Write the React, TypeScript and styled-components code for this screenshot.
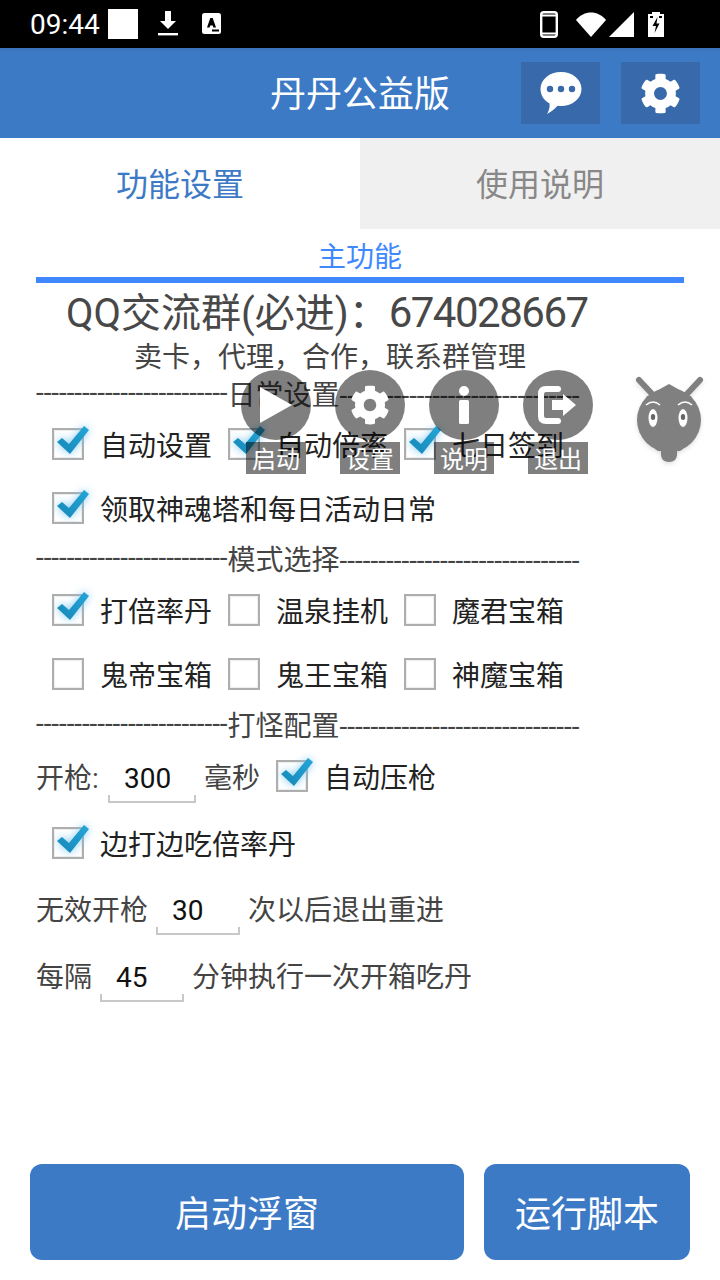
import React from "react";
import styled, { createGlobalStyle } from "styled-components";
import { FaCog } from "react-icons/fa";

const Global = createGlobalStyle`
  html, body { margin: 0; padding: 0; background: #fff; }
  body { font-family: Roboto, "Noto Sans CJK SC", sans-serif; }
  * { box-sizing: border-box; }
`;

const Page = styled.div`
  position: relative;
  width: 720px;
  height: 1280px;
  display: flex;
  flex-direction: column;
  overflow: hidden;
  background: #fff;
  color: #222;
`;

const StatusBar = styled.div`
  height: 48px;
  background: #000;
  display: flex;
  align-items: center;
  padding: 0 56px 0 30px;
  color: #fff;
  flex: none;
`;
const Time = styled.span`
  font-size: 28px;
  font-weight: 400;
  width: 78px;
`;
const Square = styled.span`
  width: 30px;
  height: 30px;
  background: #fff;
  margin-right: 19px;
`;
const StatusGap = styled.span`
  flex: 1;
`;
const StatusIcon = styled.svg<{ $ml?: number }>`
  display: block;
  flex: none;
  margin-left: ${(p) => p.$ml ?? 0}px;
`;

const AppBar = styled.header`
  height: 90px;
  flex: none;
  background: linear-gradient(#3a73bb 0, #3d7ac6 5px);
  display: grid;
  grid-template-columns: 1fr auto 1fr;
  align-items: center;
  padding: 0 20px;
  color: #fff;
`;
const Title = styled.h1`
  grid-column: 2;
  margin: 0;
  padding-bottom: 4px;
  font-size: 36px;
  font-weight: 400;
`;
const Actions = styled.div`
  grid-column: 3;
  justify-self: end;
  display: flex;
  gap: 21px;
`;
const ActionButton = styled.button`
  width: 79px;
  height: 62px;
  border: 0;
  padding: 0;
  color: #fff;
  background: #3769ab;
  display: flex;
  align-items: center;
  justify-content: center;
`;

const Tabs = styled.div`
  display: flex;
  height: 91px;
  flex: none;
`;
const Tab = styled.div<{ $active?: boolean }>`
  flex: 1;
  display: flex;
  align-items: center;
  justify-content: center;
  padding-bottom: 3px;
  font-size: 32px;
  color: ${(p) => (p.$active ? "#3d7ac6" : "#888")};
  background: ${(p) => (p.$active ? "#fff" : "#f0f0f0")};
`;

const Content = styled.main`
  flex: 1;
  display: flex;
  flex-direction: column;
  padding: 0 36px;
`;
const SectionTitle = styled.div`
  height: 48px;
  padding-top: 8px;
  text-align: center;
  font-size: 28px;
  line-height: 42px;
  color: #4088ff;
`;
const SectionLine = styled.div`
  height: 6px;
  background: #4088ff;
  margin-bottom: 5px;
`;
const GroupLine = styled.div`
  height: 48px;
  line-height: 50px;
  padding-left: 30px;
  font-size: 40px;
  color: #484848;
  white-space: nowrap;
`;
const Digits = styled.span`
  font-size: 42px;
  letter-spacing: -1.5px;
`;
const Note = styled.div`
  height: 40px;
  line-height: 44px;
  padding-left: 98px;
  font-size: 28px;
  color: #444;
  white-space: nowrap;
`;
const Divider = styled.div<{ $h: number }>`
  height: ${(p) => p.$h}px;
  display: flex;
  align-items: center;
  padding-bottom: 3px;
  font-size: 28px;
  color: #444;
  white-space: nowrap;
`;
const LeftDashes = styled.span`
  letter-spacing: -0.08px;
`;
const CheckGrid = styled.div<{ $h: number }>`
  height: ${(p) => p.$h}px;
  display: grid;
  grid-template-columns: repeat(3, 176px);
  align-items: center;
  padding-left: 16px;
`;
const CheckRow = styled.div<{ $h: number }>`
  height: ${(p) => p.$h}px;
  display: flex;
  align-items: center;
  padding-left: 16px;
`;
const CheckItem = styled.label`
  display: flex;
  align-items: center;
  gap: 16px;
  font-size: 28px;
  color: #222;
  white-space: nowrap;
`;
const Box = styled.span`
  position: relative;
  display: block;
  width: 32px;
  height: 32px;
  flex: none;
  border: 2px solid #aeaeae;
  box-shadow: inset 0 0 0 1px #eee;
  background: #fff;
`;
const Tick = styled.svg`
  position: absolute;
  left: -2px;
  top: -2px;
  overflow: visible;
  filter: drop-shadow(0 0 4px rgba(110, 195, 240, 0.9));
`;
const FormRow = styled.div<{ $h: number }>`
  height: ${(p) => p.$h}px;
  display: flex;
  align-items: center;
  padding-bottom: 2px;
  font-size: 28px;
  color: #444;
  white-space: nowrap;
`;
const FormLabel = styled.span<{ $w: number }>`
  width: ${(p) => p.$w}px;
`;
const Field = styled.div<{ $w: number }>`
  width: ${(p) => p.$w}px;
  height: 50px;
  margin: 0 8px;
  padding-left: 16px;
  font-size: 28px;
  line-height: 51px;
  color: #111;
  border: solid #c8c8c8;
  border-width: 0 0 2px;
  position: relative;
  transform: translateY(2px);
  &::before,
  &::after {
    content: "";
    position: absolute;
    bottom: 0;
    width: 2px;
    height: 6px;
    background: #c8c8c8;
  }
  &::before { left: 0; }
  &::after { right: 0; }
`;
const InlineCheck = styled.div`
  margin-left: 16px;
`;
const Spacer = styled.div`
  flex: 1;
`;
const Footer = styled.footer`
  display: flex;
  gap: 20px;
  padding: 0 30px 20px;
  flex: none;
`;
const PrimaryButton = styled.button<{ $w: number }>`
  width: ${(p) => p.$w}px;
  height: 96px;
  border: 0;
  border-radius: 12px;
  padding: 0 0 3px;
  background: #3d7ac6;
  color: #fff;
  font-family: inherit;
  font-size: 36px;
`;

const FloatMenu = styled.div`
  position: absolute;
  left: 241px;
  top: 370px;
  display: flex;
  gap: 24px;
`;
const FloatItem = styled.div`
  width: 70px;
  display: flex;
  flex-direction: column;
  align-items: center;
  gap: 2px;
`;
const FloatCircle = styled.div`
  width: 70px;
  height: 70px;
  border-radius: 50%;
  background: rgba(0, 0, 0, 0.5);
  color: #fff;
  display: flex;
  align-items: center;
  justify-content: center;
`;
const FloatLabel = styled.div`
  width: 60px;
  height: 32px;
  background: rgba(0, 0, 0, 0.5);
  color: #fff;
  font-size: 24px;
  line-height: 36px;
  text-align: center;
`;
const Robot = styled.svg`
  position: absolute;
  left: 632px;
  top: 372px;
  filter: drop-shadow(0 2px 2px rgba(0, 0, 0, 0.12));
`;

const Check = ({ checked }: { checked?: boolean }) => (
  <Box>
    {checked && (
      <Tick width="32" height="32" viewBox="0 0 32 32">
        <defs>
          <linearGradient id="tickFill" x1="0" y1="1" x2="1" y2="0">
            <stop offset="0" stopColor="#1688b8" />
            <stop offset="1" stopColor="#25a5d8" />
          </linearGradient>
        </defs>
        <path d="M5 14 L10 10 L17 16 L32 -2 L37 2 L18 26 Z" fill="url(#tickFill)" />
      </Tick>
    )}
  </Box>
);

const Item = ({ label, checked }: { label: string; checked?: boolean }) => (
  <CheckItem>
    <Check checked={checked} />
    {label}
  </CheckItem>
);

const dashL = "-".repeat(25);
const dashR = "-".repeat(31);

export default function App() {
  return (
    <Page>
      <Global />
      <StatusBar>
        <Time>09:44</Time>
        <Square />
        <StatusIcon width="22" height="28" viewBox="0 0 22 28" fill="#fff">
          <path d="M8 1h6v10h5l-8 8-8-8h5z" />
          <rect x="1" y="23" width="20" height="2.4" />
        </StatusIcon>
        <StatusIcon $ml={23} width="19" height="22" viewBox="0 0 19 22">
          <rect width="19" height="21" rx="2.5" fill="#fff" />
          <path d="M5 14.5 L8.3 5 h2.4 L14 14.5 h-2.6 l-.6-2 h-2.6 l-.6 2z" fill="#000" />
          <rect x="10" y="16.5" width="7" height="2" fill="#000" />
        </StatusIcon>
        <StatusGap />
        <StatusIcon width="18" height="27" viewBox="0 0 18 27">
          <rect x="1.2" y="1.2" width="15.6" height="24.6" rx="2.5" fill="none" stroke="#fff" strokeWidth="2.4" />
          <rect x="1" y="3.5" width="16" height="2" fill="#fff" />
          <rect x="1" y="21.5" width="16" height="2" fill="#fff" />
        </StatusIcon>
        <StatusIcon $ml={18} width="30" height="25" viewBox="0 0 30 25" fill="#fff">
          <path d="M0 8 C8 -2 22 -2 30 8 L15 25 Z" />
        </StatusIcon>
        <StatusIcon $ml={3} width="25" height="25" viewBox="0 0 25 25" fill="#fff">
          <path d="M25 0 V25 H0 Z" />
        </StatusIcon>
        <StatusIcon $ml={14} width="16" height="25" viewBox="0 0 16 25">
          <path d="M4 0h8v2h4v23H0V2h4z" fill="#fff" />
          <path d="M9.5 5 L4.5 14 H8 L6.5 21 L11.5 11.5 H8.5 Z" fill="#000" />
          <rect x="2" y="4" width="3" height="2" fill="#000" />
          <rect x="11" y="4" width="3" height="2" fill="#000" />
        </StatusIcon>
      </StatusBar>

      <AppBar>
        <Title>丹丹公益版</Title>
        <Actions>
          <ActionButton aria-label="消息">
            <svg width="42" height="44" viewBox="0 0 42 44">
              <path
                d="M21 1 C32.5 1 41.5 8.5 41.5 18 C41.5 27.5 32.5 35 21 35 C19.5 35 18.5 35 17.5 34.8 C15 38 11 41 7 43 C9 39.5 10 36 9.5 32.5 C4 29.5 .5 24 .5 18 C.5 8.5 9.5 1 21 1 Z"
                fill="#fff"
              />
              <circle cx="10" cy="18" r="3.2" fill="#3769ab" />
              <circle cx="21" cy="18" r="3.2" fill="#3769ab" />
              <circle cx="32" cy="18" r="3.2" fill="#3769ab" />
            </svg>
          </ActionButton>
          <ActionButton aria-label="设置">
            <FaCog size={41} />
          </ActionButton>
        </Actions>
      </AppBar>

      <Tabs>
        <Tab $active>功能设置</Tab>
        <Tab>使用说明</Tab>
      </Tabs>

      <Content>
        <SectionTitle>主功能</SectionTitle>
        <SectionLine />
        <GroupLine>
          QQ交流群(必进)：<Digits>674028667</Digits>
        </GroupLine>
        <Note>卖卡，代理，合作，联系群管理</Note>
        <Divider $h={36}>
          <LeftDashes>{dashL}</LeftDashes>日常设置{dashR}
        </Divider>
        <CheckGrid $h={64}>
          <Item label="自动设置" checked />
          <Item label="自动倍率" checked />
          <Item label="七日签到" checked />
        </CheckGrid>
        <CheckRow $h={64}>
          <Item label="领取神魂塔和每日活动日常" checked />
        </CheckRow>
        <Divider $h={38}>
          <LeftDashes>{dashL}</LeftDashes>模式选择{dashR}
        </Divider>
        <CheckGrid $h={64}>
          <Item label="打倍率丹" checked />
          <Item label="温泉挂机" />
          <Item label="魔君宝箱" />
        </CheckGrid>
        <CheckGrid $h={64}>
          <Item label="鬼帝宝箱" />
          <Item label="鬼王宝箱" />
          <Item label="神魔宝箱" />
        </CheckGrid>
        <Divider $h={38}>
          <LeftDashes>{dashL}</LeftDashes>打怪配置{dashR}
        </Divider>
        <FormRow $h={66}>
          <FormLabel $w={64}>开枪:</FormLabel>
          <Field $w={88}>300</Field>
          毫秒
          <InlineCheck>
            <Item label="自动压枪" checked />
          </InlineCheck>
        </FormRow>
        <CheckRow $h={66}>
          <Item label="边打边吃倍率丹" checked />
        </CheckRow>
        <FormRow $h={66}>
          无效开枪
          <Field $w={84}>30</Field>
          次以后退出重进
        </FormRow>
        <FormRow $h={68}>
          每隔
          <Field $w={84}>45</Field>
          分钟执行一次开箱吃丹
        </FormRow>
        <Spacer />
      </Content>

      <Footer>
        <PrimaryButton $w={434}>启动浮窗</PrimaryButton>
        <PrimaryButton $w={206}>运行脚本</PrimaryButton>
      </Footer>

      <FloatMenu>
        <FloatItem>
          <FloatCircle>
            <svg width="34" height="38" viewBox="0 0 34 38">
              <path d="M1 1 L33 19 L1 37 Z" fill="#fff" />
            </svg>
          </FloatCircle>
          <FloatLabel>启动</FloatLabel>
        </FloatItem>
        <FloatItem>
          <FloatCircle>
            <FaCog size={40} />
          </FloatCircle>
          <FloatLabel>设置</FloatLabel>
        </FloatItem>
        <FloatItem>
          <FloatCircle>
            <svg width="12" height="38" viewBox="0 0 12 38" fill="#fff">
              <circle cx="6" cy="5" r="5" />
              <rect x="1" y="14" width="10" height="24" rx="1.5" />
            </svg>
          </FloatCircle>
          <FloatLabel>说明</FloatLabel>
        </FloatItem>
        <FloatItem>
          <FloatCircle>
            <svg width="40" height="38" viewBox="0 0 40 38">
              <path
                d="M20 3 H8 Q3 3 3 8 V30 Q3 35 8 35 H20"
                fill="none"
                stroke="#fff"
                strokeWidth="6"
                strokeLinecap="round"
              />
              <path d="M14 14 H25 V8 L38 19 L25 30 V24 H14 Z" fill="#fff" />
            </svg>
          </FloatCircle>
          <FloatLabel>退出</FloatLabel>
        </FloatItem>
      </FloatMenu>

      <Robot width="74" height="98" viewBox="632 372 74 98">
        <path d="M639 380 L653 395 M700 380 L686 395" stroke="#808080" strokeWidth="6" strokeLinecap="round" fill="none" />
        <path d="M669 384 L692 397 L646 397 Z" fill="#808080" />
        <circle cx="669" cy="420" r="32" fill="#808080" />
        <path d="M653 446 Q669 438 685 446 Q682 452 677 451 Q678 462 669 462 Q660 462 661 451 Q656 452 653 446 Z" fill="#808080" />
        <path d="M646 405 Q653 399 660 405 M678 405 Q685 399 692 405" stroke="#fff" strokeWidth="1.6" fill="none" />
        <ellipse cx="653" cy="418" rx="4.5" ry="9" fill="#fff" />
        <ellipse cx="683" cy="418" rx="4.5" ry="9" fill="#fff" />
        <ellipse cx="653" cy="417" rx="2.2" ry="3" fill="#666" />
        <ellipse cx="683" cy="417" rx="2.2" ry="3" fill="#666" />
      </Robot>
    </Page>
  );
}
